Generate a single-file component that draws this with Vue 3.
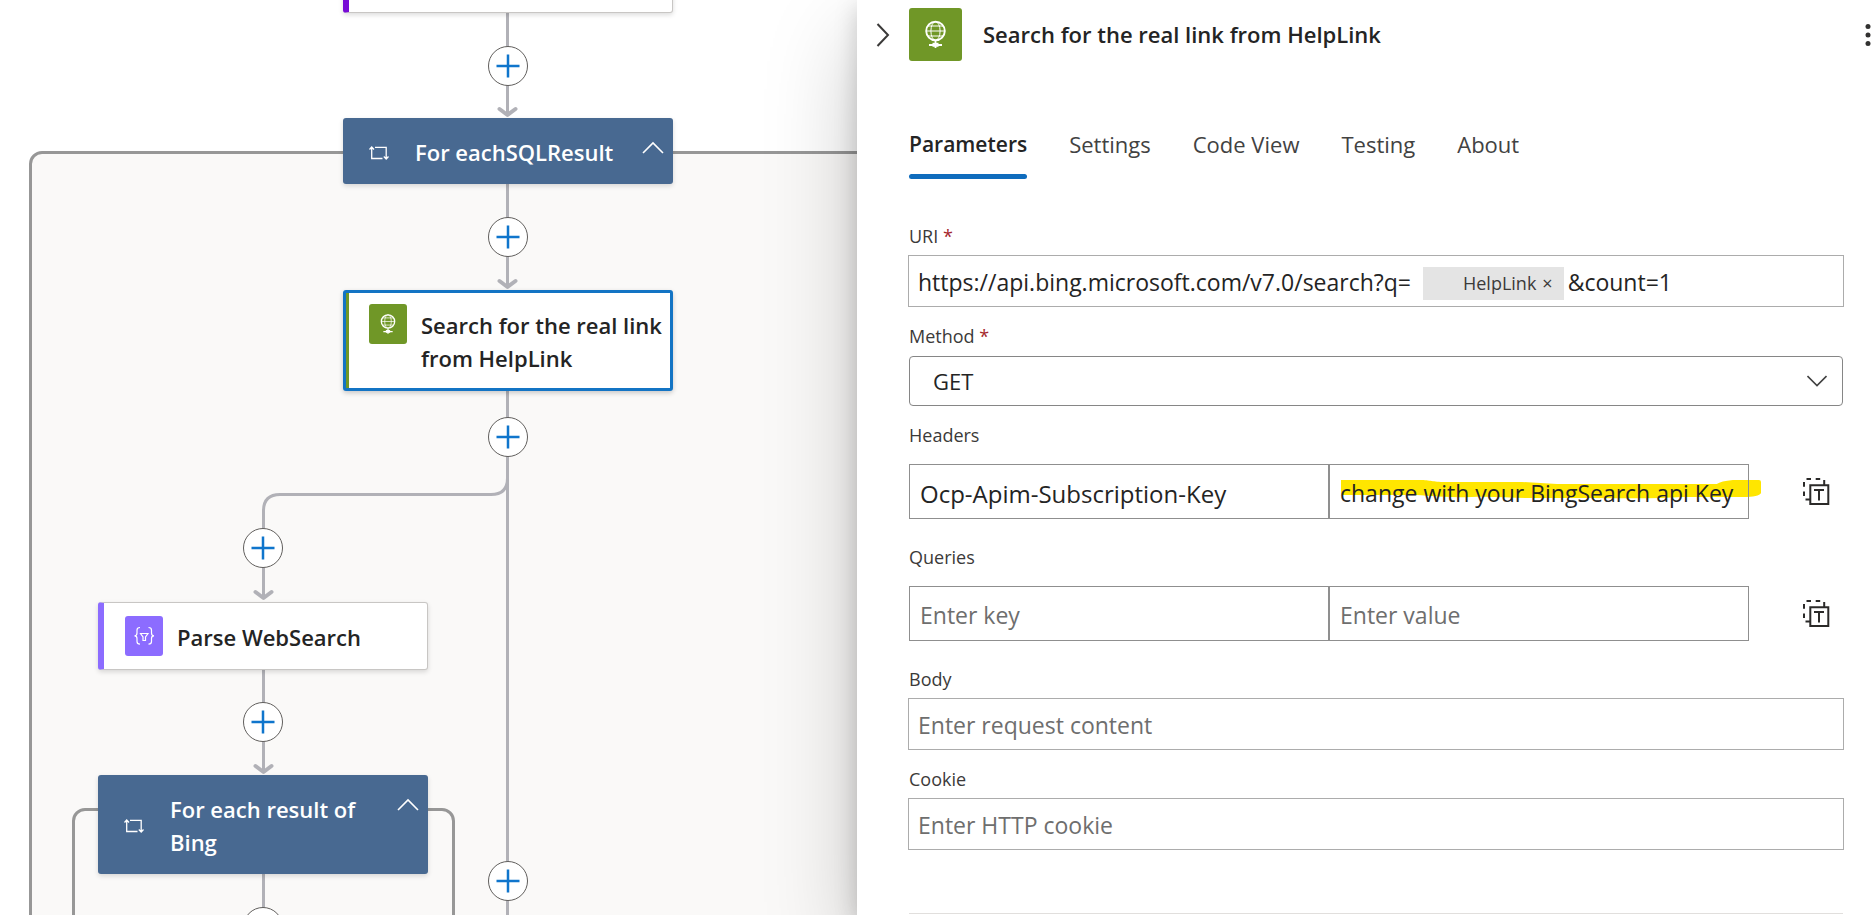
<script setup>
import { ref } from 'vue'

const edges = [
  'M507.5 13V115',
  'M507.5 184V287',
  'M507.5 391V915',
  'M507.5 472V478Q507.5 494.500 491 494.500H280Q263.500 494.500 263.500 511V598',
  'M263.500 669V772',
  'M263.500 874V915',
]
const arrows = [
  { x: 507.5, y: 115 },
  { x: 507.5, y: 287 },
  { x: 263.5, y: 598 },
  { x: 263.5, y: 772 },
]
const inserts = [
  { x: 488, y: 46 },
  { x: 488, y: 217 },
  { x: 488, y: 417 },
  { x: 488, y: 861 },
  { x: 243, y: 528 },
  { x: 243, y: 702 },
  { x: 243, y: 907 },
]
const loops = [
  { title: 'For eachSQLResult', x: 343, y: 118 },
  { title: 'For each result of Bing', x: 98, y: 775 },
]
const place = (p) => ({ left: p.x + 'px', top: p.y + 'px' })

const tabs = ['Parameters', 'Settings', 'Code View', 'Testing', 'About']
const activeTab = ref('Parameters')

const uriStart = ref('https://api.bing.microsoft.com/v7.0/search?q=')
const uriEnd = ref('&count=1')
const method = ref('GET')
const headerKey = ref('Ocp-Apim-Subscription-Key')
const headerValue = ref('change with your BingSearch api Key')
const queryKey = ref('')
const queryValue = ref('')
const body = ref('')
const cookie = ref('')
</script>

<template>
  <div class="designer">
    <main class="canvas" aria-label="Workflow">
      <div class="scope scope-outer"></div>
      <div class="scope scope-inner"></div>

      <svg class="edges" width="857" height="915" fill="none" aria-hidden="true">
        <path v-for="d in edges" :key="d" :d="d" />
        <path v-for="a in arrows" :key="a.x + '-' + a.y" :d="`M${a.x - 8} ${a.y - 6}L${a.x} ${a.y}L${a.x + 8} ${a.y - 6}`" stroke-width="4" stroke-linecap="round" stroke-linejoin="round" />
      </svg>

      <div class="card card-cut"></div>

      <section v-for="l in loops" :key="l.title" class="loop" :style="place(l)">
        <svg class="loop-icon" width="20" height="14" viewBox="0 0 20 14" fill="none" stroke="#fff" stroke-width="1.300" aria-hidden="true">
          <path d="M0.500 3.500L2.700 1L5 3.500M2.700 1V12.500H13.500M6 1.300H17.200V13M14.800 10.500L17.200 13L19.500 10.500" />
        </svg>
        <h2>{{ l.title }}</h2>
        <button class="collapse" :aria-label="'Collapse ' + l.title">
          <svg width="22" height="13" viewBox="0 0 22 13" fill="none" stroke="#fff" stroke-width="1.600" aria-hidden="true"><path d="M1 12L11 2L21 12" /></svg>
        </button>
      </section>

      <section class="card card-search">
        <span class="tile tile-http">
          <svg viewBox="0 0 53 53" fill="none" stroke="#fff" aria-hidden="true">
            <circle cx="26.500" cy="23" r="9.300" stroke-width="1.900" />
            <path d="M17 23H36M19 18H34M19 28H34" stroke-width="1" />
            <ellipse cx="26.500" cy="23" rx="4.600" ry="9.300" stroke-width="1" />
            <path d="M26.500 33V40M20 37H33" stroke-width="1.800" />
            <path d="M23.500 36.800H29.500" stroke-width="4" />
          </svg>
        </span>
        <h2>Search for the real link from HelpLink</h2>
      </section>

      <section class="card card-parse">
        <span class="tile tile-data">
          <svg viewBox="0 0 38 40" fill="none" stroke="#fff" stroke-width="1.200" aria-hidden="true">
            <path d="M15 11.500Q12 11.500 12 14V17Q12 19.800 9.500 19.800Q12 19.800 12 22.500V25.500Q12 28.200 15 28.200" />
            <path d="M23.500 11.500Q26.500 11.500 26.500 14V17Q26.500 19.800 29 19.800Q26.500 19.800 26.500 22.500V25.500Q26.500 28.200 23.500 28.200" />
            <path d="M15.500 17.500H23L20.500 21V24.500H18V21Z" />
          </svg>
        </span>
        <h2>Parse WebSearch</h2>
      </section>

      <button v-for="p in inserts" :key="p.x + '-' + p.y" class="insert" :style="place(p)" aria-label="Insert a new step">
        <svg width="24" height="24" viewBox="0 0 24 24" stroke="#0f75cc" stroke-width="2.500" aria-hidden="true"><path d="M12 0.500V23.500M0.500 12H23.500" /></svg>
      </button>
    </main>

    <aside class="panel" aria-label="Action details">
      <header class="panel-head">
        <button class="icon-button close" aria-label="Close panel">
          <svg width="14" height="24" viewBox="0 0 14 24" fill="none" stroke="#3b3a39" stroke-width="2" aria-hidden="true"><path d="M1.500 1L12 12L1.500 23" /></svg>
        </button>
        <span class="tile tile-http tile-large">
          <svg viewBox="0 0 53 53" fill="none" stroke="#fff" aria-hidden="true">
            <circle cx="26.500" cy="23" r="9.300" stroke-width="1.900" />
            <path d="M17 23H36M19 18H34M19 28H34" stroke-width="1" />
            <ellipse cx="26.500" cy="23" rx="4.600" ry="9.300" stroke-width="1" />
            <path d="M26.500 33V40M20 37H33" stroke-width="1.800" />
            <path d="M23.500 36.800H29.500" stroke-width="4" />
          </svg>
        </span>
        <h1>Search for the real link from HelpLink</h1>
        <button class="icon-button more" aria-label="More commands">
          <svg width="6" height="24" viewBox="0 0 6 24" fill="#323130" aria-hidden="true"><circle cx="3" cy="3.500" r="2.500" /><circle cx="3" cy="12" r="2.500" /><circle cx="3" cy="20.500" r="2.500" /></svg>
        </button>
      </header>

      <div class="tabs" role="tablist">
        <button v-for="t in tabs" :key="t" role="tab" class="tab" :class="{ active: t === activeTab }" :aria-selected="t === activeTab" @click="activeTab = t">{{ t }}</button>
      </div>

      <form class="fields" @submit.prevent>
        <div class="field">
          <label for="uri">URI <span class="required">*</span></label>
          <div class="box uri">
            <input id="uri" v-model="uriStart" class="uri-part" type="text" />
            <span class="token">HelpLink <button type="button" aria-label="Remove HelpLink">×</button></span>
            <input v-model="uriEnd" class="uri-part" type="text" aria-label="URI, after HelpLink" />
          </div>
        </div>

        <div class="field field-select">
          <label for="method">Method <span class="required">*</span></label>
          <div class="select">
            <select id="method" v-model="method">
              <option>GET</option>
              <option>POST</option>
              <option>PUT</option>
              <option>DELETE</option>
            </select>
            <svg width="20" height="12" viewBox="0 0 20 12" fill="none" stroke="#424242" stroke-width="1.600" aria-hidden="true"><path d="M0.500 1L10 10.500L19.500 1" /></svg>
          </div>
        </div>

        <div class="field field-pair">
          <label for="header-key">Headers</label>
          <div class="pair">
            <input id="header-key" v-model="headerKey" class="key" type="text" />
            <div class="marked">
              <svg viewBox="0 0 418 20" preserveAspectRatio="none" fill="#ffe600" aria-hidden="true">
                <path d="M0 1H78C90 1 90 3 104 3H180L215 5H374Q378 2 390 1H416Q418 1 418 3V14Q416 18 400 18H340C310 20 280 19 250 19H190C170 19 150 17 130 18C100 19 85 16 70 16H0Z" />
              </svg>
              <input v-model="headerValue" type="text" aria-label="Header value" />
            </div>
            <button type="button" class="icon-button text-mode" aria-label="Switch headers to text mode">
              <svg width="27" height="27" viewBox="0 0 27 27" fill="none" stroke="#2b2a29" stroke-width="2" aria-hidden="true">
                <path d="M7.300 7.300H25.300V26H7.300ZM11 12H21M16 12V22.500M3.500 1H8M12.700 1H17.200M21.200 2V6.500M1 4V8.700M1 13.500V18M2.500 21.500H7" />
              </svg>
            </button>
          </div>
        </div>

        <div class="field field-pair">
          <label for="query-key">Queries</label>
          <div class="pair">
            <input id="query-key" v-model="queryKey" type="text" placeholder="Enter key" />
            <input v-model="queryValue" type="text" placeholder="Enter value" aria-label="Query value" />
            <button type="button" class="icon-button text-mode" aria-label="Switch queries to text mode">
              <svg width="27" height="27" viewBox="0 0 27 27" fill="none" stroke="#2b2a29" stroke-width="2" aria-hidden="true">
                <path d="M7.300 7.300H25.300V26H7.300ZM11 12H21M16 12V22.500M3.500 1H8M12.700 1H17.200M21.200 2V6.500M1 4V8.700M1 13.500V18M2.500 21.500H7" />
              </svg>
            </button>
          </div>
        </div>

        <div class="field">
          <label for="body">Body</label>
          <input id="body" v-model="body" class="box" type="text" placeholder="Enter request content" />
        </div>

        <div class="field">
          <label for="cookie">Cookie</label>
          <input id="cookie" v-model="cookie" class="box" type="text" placeholder="Enter HTTP cookie" />
        </div>
      </form>

      <hr class="divider" />
    </aside>
  </div>
</template>

<style>
body {
  margin: 0;
  overflow: hidden;
}
</style>

<style scoped>
.designer,
.designer * {
  box-sizing: border-box;
}
.designer {
  display: grid;
  grid-template-columns: minmax(0, 857fr) minmax(0, 1015fr);
  height: 100vh;
  overflow: hidden;
  background: #fff;
  color: #242424;
  font-family: "Open Sans", "Noto Sans", sans-serif;
}
button,
input,
select {
  margin: 0;
  padding: 0;
  border: 0;
  background: transparent;
  color: inherit;
  font: inherit;
}
h1,
h2 {
  margin: 0;
  font-size: 22px;
  font-weight: 600;
}

/* Canvas */
.canvas {
  position: relative;
  overflow: hidden;
}
.scope {
  position: absolute;
  border: 3px solid #979797;
  border-radius: 13px;
  background: #faf9f8;
}
.scope-outer {
  inset: 151px -40px -40px 29px;
}
.scope-inner {
  left: 72px;
  top: 808px;
  bottom: -40px;
  width: 383px;
}
.edges {
  position: absolute;
  left: 0;
  top: 0;
  stroke: #b1b1b7;
  stroke-width: 3;
}
.card,
.loop {
  position: absolute;
  display: flex;
  width: 330px;
  border-radius: 3px;
  box-shadow: 0 2px 5px rgba(0, 0, 0, 0.14);
  line-height: 33px;
}
.card {
  border: 1px solid #c8c6c4;
  background: #fff;
}
.card-cut {
  left: 343px;
  top: -54px;
  height: 67px;
  border-left: 6px solid #770bd6;
}
.card-search {
  left: 343px;
  top: 290px;
  gap: 14px;
  height: 101px;
  padding: 11px 0 0 23px;
  border: 3px solid #1374c4;
  box-shadow: inset 3px 0 #709727, 0 2px 5px rgba(0, 0, 0, 0.2);
}
.card-search h2,
.card-parse h2 {
  padding-top: 5px;
}
.card-parse {
  left: 98px;
  top: 602px;
  gap: 14px;
  height: 68px;
  padding: 13px 0 0 21px;
  border-left: 6px solid #8c6cff;
}
.loop {
  align-items: center;
  gap: 26px;
  padding: 18px 0 15px 26px;
  background: #486991;
  color: #fff;
}
.loop h2 {
  width: 204px;
}
.loop-icon {
  flex: none;
}
.collapse {
  position: absolute;
  top: 23px;
  right: 9px;
  display: flex;
}
.tile {
  display: flex;
  flex: none;
  width: 38px;
  height: 40px;
  border-radius: 3px;
}
.tile svg {
  width: 100%;
  height: 100%;
}
.tile-http {
  background: #709727;
}
.tile-data {
  background: #8c6cff;
}
.tile-large {
  width: 53px;
  height: 53px;
}
.insert {
  position: absolute;
  display: flex;
  align-items: center;
  justify-content: center;
  width: 40px;
  height: 40px;
  border: 1px solid #605e5c;
  border-radius: 50%;
  background: #fff;
}

/* Panel */
.panel {
  position: relative;
  z-index: 1;
  background: #fff;
  box-shadow: 0 38px 86px rgba(0, 0, 0, 0.22), 0 7px 22px rgba(0, 0, 0, 0.18);
}
.panel-head {
  display: flex;
  align-items: center;
  padding: 8px 1px 0 19px;
}
.icon-button {
  display: flex;
}
.close {
  margin-right: 19px;
}
h1 {
  flex: 1;
  padding-bottom: 2px;
  margin-left: 21px;
  line-height: 30px;
}
.tabs {
  display: flex;
  gap: 42px;
  margin-top: 68px;
  padding-left: 52px;
}
.tab {
  position: relative;
  padding-bottom: 20px;
  color: #424242;
  font-size: 22px;
  line-height: 30px;
}
.tab.active {
  color: #242424;
  font-size: 21px;
  font-weight: 600;
}
.tab.active::after {
  content: "";
  position: absolute;
  inset: auto 0 0;
  height: 5px;
  border-radius: 3px;
  background: #0f6cbd;
}
.fields {
  display: grid;
  gap: 16px;
  padding: 44px 29px 0 52px;
}
label {
  display: block;
  margin-bottom: 6px;
  color: #3b3a39;
  font-size: 18px;
  line-height: 26px;
}
.required {
  color: #a4262c;
}
.box {
  display: block;
  width: calc(100% + 2px);
  height: 52px;
  margin-left: -1px;
  padding: 2px 9px 0;
  border: 1px solid #acacac;
  font-size: 23px;
}
.box::placeholder,
.pair input::placeholder {
  color: #6e6e6e;
  opacity: 1;
}
.uri {
  display: flex;
  align-items: center;
}
.uri-part {
  field-sizing: content;
}
.token {
  display: flex;
  gap: 6px;
  margin: 2px 4px 0 12px;
  padding: 0 11px 0 40px;
  background: #e4e4e4;
  color: #3b3a39;
  font-size: 18px;
  line-height: 33px;
}
.field-select label {
  margin-bottom: 7px;
}
.select {
  position: relative;
}
.select select {
  display: block;
  width: 100%;
  height: 50px;
  padding: 0 23px;
  border: 1px solid #868686;
  border-radius: 4px;
  appearance: none;
  font-size: 22px;
}
.select svg {
  position: absolute;
  top: 19px;
  right: 16px;
  pointer-events: none;
}
.field-pair {
  padding-bottom: 9px;
}
.field-pair label {
  margin-bottom: 16px;
}
.pair {
  display: grid;
  grid-template-columns: 1fr 1fr 81px;
  align-items: center;
  padding-right: 13px;
}
.pair input {
  width: 100%;
  height: 55px;
  padding: 3px 2px 0 10px;
  border: 1px solid #8f8f8f;
  font-size: 23px;
}
.pair .key {
  font-size: 24px;
}
.text-mode {
  justify-self: end;
}
.marked {
  position: relative;
}
.marked input {
  position: relative;
  display: block;
}
.marked svg {
  position: absolute;
  top: 15px;
  left: 12px;
  width: 100%;
  height: 20px;
}
.divider {
  height: 1px;
  margin: 63px 29px 0 52px;
  border: 0;
  background: #e1dfdd;
}
</style>
